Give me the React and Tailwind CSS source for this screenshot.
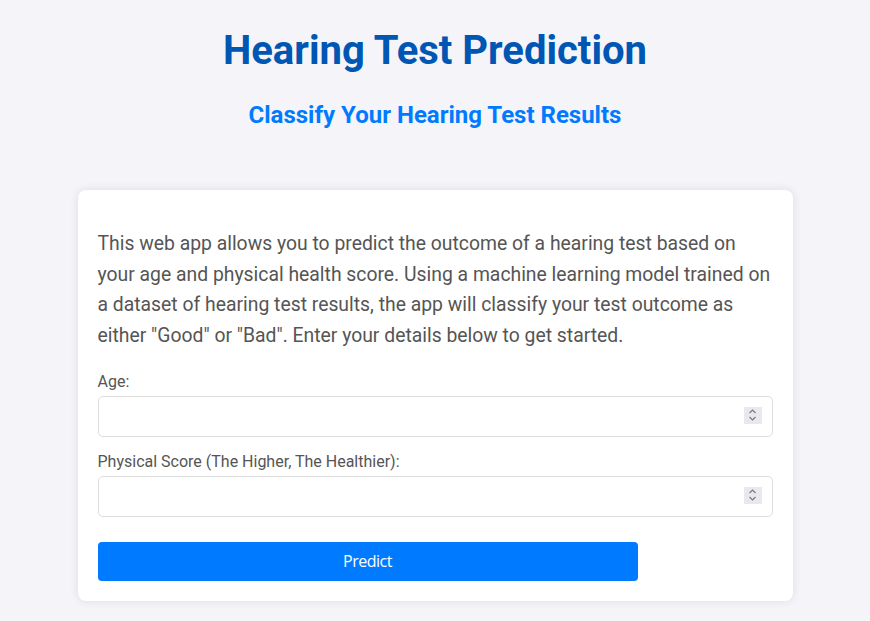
function NumberField({ id }) {
  return (
    <div className="relative mt-[2px]">
      <input
        id={id}
        type="number"
        className="h-[41px] w-full rounded-[5px] border border-[#ddd] px-2 text-[16px] outline-none [appearance:textfield]"
      />
      {/* spin buttons */}
      <div className="pointer-events-none absolute right-[11px] top-[11px] flex h-[17px] w-[18px] flex-col items-center justify-center bg-[#e9e9ed]">
        <svg width="9" height="14" viewBox="0 0 9 14" fill="none" stroke="#7a7a80" strokeWidth="1.2">
          <path d="M1.5 5 L4.5 2 L7.5 5" />
          <path d="M1.5 9 L4.5 12 L7.5 9" />
        </svg>
      </div>
    </div>
  );
}

export default function App() {
  return (
    <div className="min-h-screen bg-[#f4f4f9] font-['Roboto',sans-serif] pt-[27px]">
      <h1 className="text-center text-[40px] leading-[48px] font-bold text-[#0056b3]">
        Hearing Test Prediction
      </h1>
      <h2 className="mt-[26px] text-center text-[24px] leading-[28px] font-bold text-[#007bff]">
        Classify Your Hearing Test Results
      </h2>
      <div className="mx-auto mt-[61px] w-[715px] rounded-lg bg-white px-5 pt-5 pb-5 shadow-[0_0_10px_rgba(0,0,0,0.1)]">
        <p className="mt-[19px] text-[19.35px] leading-[30.7px] text-[#555]">
          This web app allows you to predict the outcome of a hearing test based on your age and
          physical health score. Using a machine learning model trained on a dataset of hearing
          test results, the app will classify your test outcome as either "Good" or "Bad". Enter
          your details below to get started.
        </p>
        <form className="mt-[18px] flex flex-col">
          <label htmlFor="age" className="text-[16px] leading-[24px] text-[#555]">
            Age:
          </label>
          <NumberField id="age" />
          <label htmlFor="score" className="mt-[13px] text-[16px] leading-[24px] text-[#555]">
            Physical Score (The Higher, The Healthier):
          </label>
          <NumberField id="score" />
          <button
            type="button"
            className="mt-[25px] h-[39px] w-[80%] rounded-[4px] bg-[#007bff] text-[16px] tracking-[-0.5px] text-white font-['Open_Sans',sans-serif]"
          >
            Predict
          </button>
        </form>
      </div>
    </div>
  );
}
